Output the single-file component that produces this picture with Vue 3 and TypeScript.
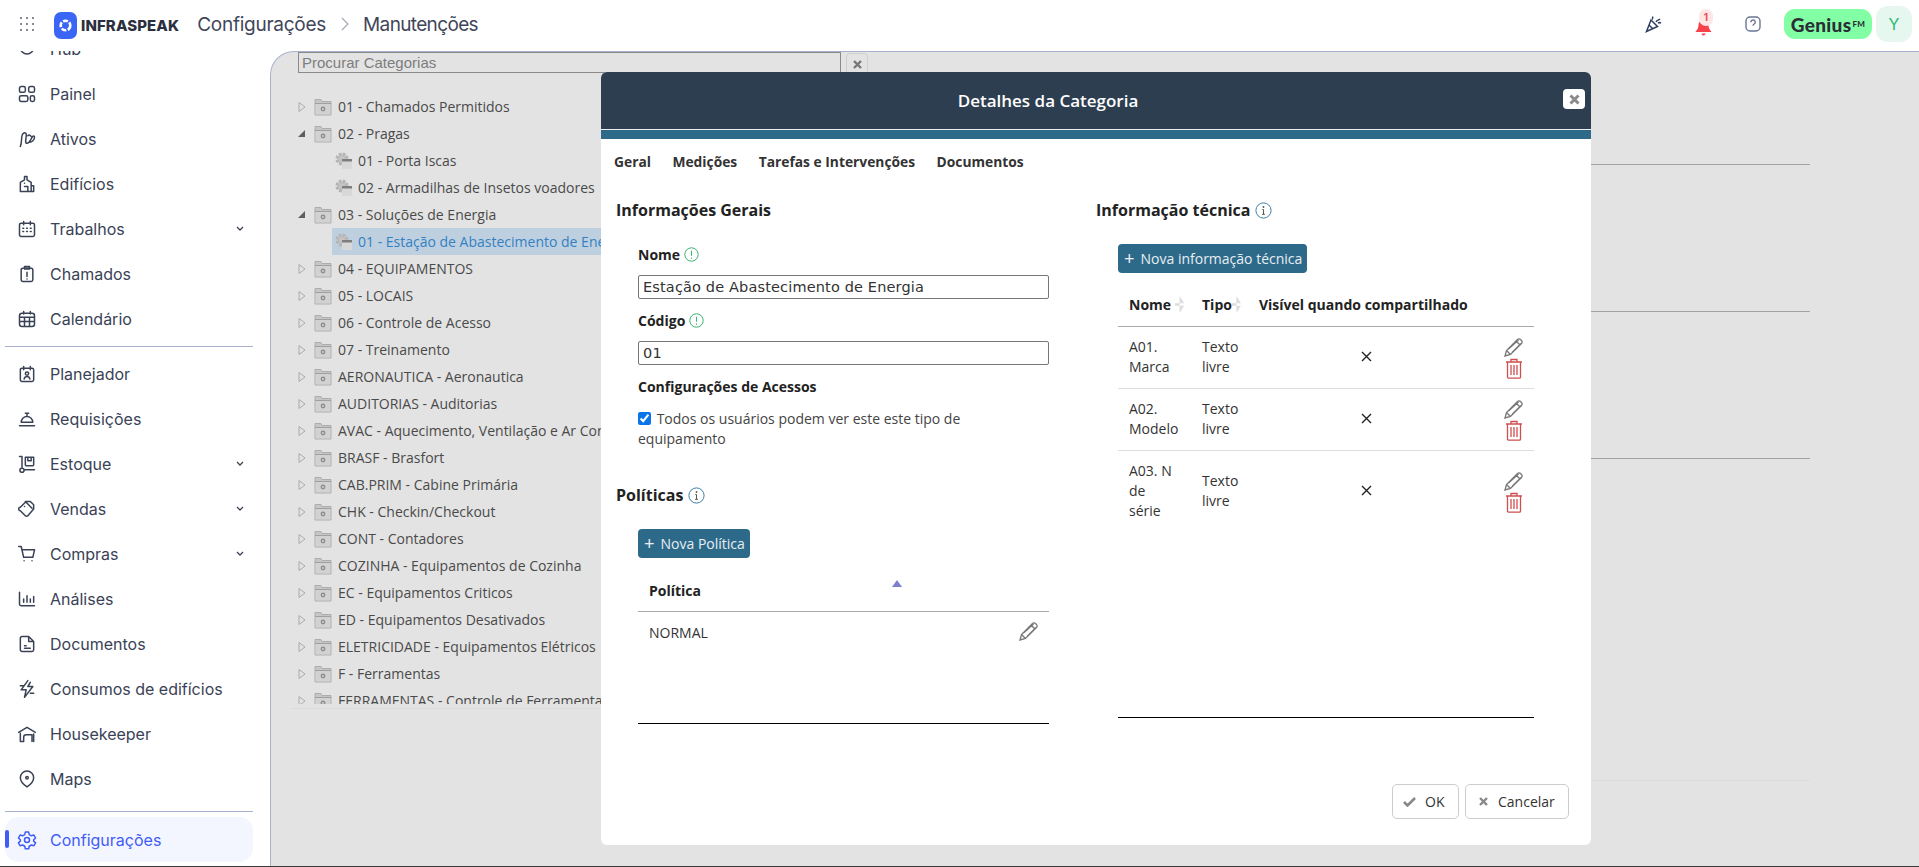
<script setup lang="ts">
interface NavItem { label: string; icon: string; chevron?: boolean }
const navTop: NavItem[] = [
  { label: 'Hub', icon: 'hub' },
  { label: 'Painel', icon: 'painel' },
  { label: 'Ativos', icon: 'ativos' },
  { label: 'Edifícios', icon: 'edificios' },
  { label: 'Trabalhos', icon: 'trabalhos', chevron: true },
  { label: 'Chamados', icon: 'chamados' },
  { label: 'Calendário', icon: 'calendario' },
]
const navMid: NavItem[] = [
  { label: 'Planejador', icon: 'planejador' },
  { label: 'Requisições', icon: 'requisicoes' },
  { label: 'Estoque', icon: 'estoque', chevron: true },
  { label: 'Vendas', icon: 'vendas', chevron: true },
  { label: 'Compras', icon: 'compras', chevron: true },
  { label: 'Análises', icon: 'analises' },
  { label: 'Documentos', icon: 'documentos' },
  { label: 'Consumos de edifícios', icon: 'consumos' },
  { label: 'Housekeeper', icon: 'housekeeper' },
  { label: 'Maps', icon: 'maps' },
]
const icons: Record<string, string> = {
  hub: 'M4 10a8 8 0 1 0 16 0a8 8 0 1 0-16 0',
  painel: 'M5 3h3a2 2 0 0 1 2 2v3a2 2 0 0 1-2 2H5a2 2 0 0 1-2-2V5a2 2 0 0 1 2-2zM16 3h3a2 2 0 0 1 2 2v3a2 2 0 0 1-2 2h-3a2 2 0 0 1-2-2V5a2 2 0 0 1 2-2zM5 14h6a2 2 0 0 1 2 2v3a2 2 0 0 1-2 2H5a2 2 0 0 1-2-2v-3a2 2 0 0 1 2-2zM18 14h1a2 2 0 0 1 2 2v3a2 2 0 0 1-2 2h-1a2 2 0 0 1-2-2v-3a2 2 0 0 1 2-2z',
  ativos: 'M4 21c2-5 1-9 2-13c.6-3 4-5 5-2c1 3-2 9 0 11c2 1 5-3 7-7c1-2 3-2 3 0c0 3-3 6-6 6M13 8c1-1 3-1 4 1',
  edificios: 'M4 21V10l5-3V3h3v4l5 3v11zM17 14h3v7H4M9 15h4v6M9 11h.01',
  trabalhos: 'M5 5h14a2 2 0 0 1 2 2v12a2 2 0 0 1-2 2H5a2 2 0 0 1-2-2V7a2 2 0 0 1 2-2zM8 3v4M16 3v4M7 11h1M11.500 11h1M16 11h1M7 15h1M11.500 15h1M16 15h1',
  chamados: 'M7 5h10a2 2 0 0 1 2 2v12a2 2 0 0 1-2 2H7a2 2 0 0 1-2-2V7a2 2 0 0 1 2-2zM9 3h6v3H9zM12 10v5M12 18h.01',
  calendario: 'M6 5h12a3 3 0 0 1 3 3v10a3 3 0 0 1-3 3H6a3 3 0 0 1-3-3V8a3 3 0 0 1 3-3zM8 3v3M16 3v3M3 10h18M3 15h18M9 10v11M15 10v11',
  planejador: 'M6 5h12a2 2 0 0 1 2 2v12a2 2 0 0 1-2 2H6a2 2 0 0 1-2-2V7a2 2 0 0 1 2-2zM8 3v4M16 3v4M12 9.500a2 2 0 1 0 0 4a2 2 0 1 0 0-4M8.500 18c.5-2 2-3 3.500-3s3 1 3.500 3',
  requisicoes: 'M3 20h18M5 16a7 7 0 0 1 14 0zM12 9V6M10 5h4',
  estoque: 'M3 3h3v13M6 17a2.500 2.500 0 1 0 0 5a2.500 2.500 0 1 0 0-5M9 19h12M10 4h10v9a1 1 0 0 1-1 1h-8a1 1 0 0 1-1-1zM13 4v4h4V4',
  vendas: 'M4 10l7-7h5l4 4v5l-7 8a2 2 0 0 1-3 0l-6-6a2 2 0 0 1 0-4M10 3l8 8M9 9h.01',
  compras: 'M2 3h3l3 13h11l2-9H6M8.500 20h.01M18 20h.01',
  analises: 'M3 4v14a2 2 0 0 0 2 2h16M8 12v4M12 8v8M16 12v4M20 9v7',
  documentos: 'M6 3h8l6 6v10a2 2 0 0 1-2 2H6a2 2 0 0 1-2-2V5a2 2 0 0 1 2-2zM14 3v6h6M9 14h2M9 17h7',
  consumos: 'M13 2L5 13h6l-2 9l10-13h-6l3-5M4 8h4M16 17h4',
  housekeeper: 'M2 10l10-6l10 6M4 21V11M20 21v-9M8 21v-5a3 3 0 0 1 3-3h7v8M4 21h4M8 15h.01',
  maps: 'M12 2.500a8 8 0 0 1 8 8c0 5-5 9-8 11c-3-2-8-6-8-11a8 8 0 0 1 8-8zM12 9a1.500 1.500 0 1 0 0 3a1.500 1.500 0 1 0 0-3',
}
interface TreeRow { label: string; kind: 'closed' | 'open' | 'leaf'; selected?: boolean }
const tree: TreeRow[] = [
  { label: '01 - Chamados Permitidos', kind: 'closed' },
  { label: '02 - Pragas', kind: 'open' },
  { label: '01 - Porta Iscas', kind: 'leaf' },
  { label: '02 - Armadilhas de Insetos voadores', kind: 'leaf' },
  { label: '03 - Soluções de Energia', kind: 'open' },
  { label: '01 - Estação de Abastecimento de Energia', kind: 'leaf', selected: true },
  { label: '04 - EQUIPAMENTOS', kind: 'closed' },
  { label: '05 - LOCAIS', kind: 'closed' },
  { label: '06 - Controle de Acesso', kind: 'closed' },
  { label: '07 - Treinamento', kind: 'closed' },
  { label: 'AERONAUTICA - Aeronautica', kind: 'closed' },
  { label: 'AUDITORIAS - Auditorias', kind: 'closed' },
  { label: 'AVAC - Aquecimento, Ventilação e Ar Condicionado', kind: 'closed' },
  { label: 'BRASF - Brasfort', kind: 'closed' },
  { label: 'CAB.PRIM - Cabine Primária', kind: 'closed' },
  { label: 'CHK - Checkin/Checkout', kind: 'closed' },
  { label: 'CONT - Contadores', kind: 'closed' },
  { label: 'COZINHA - Equipamentos de Cozinha', kind: 'closed' },
  { label: 'EC - Equipamentos Criticos', kind: 'closed' },
  { label: 'ED - Equipamentos Desativados', kind: 'closed' },
  { label: 'ELETRICIDADE - Equipamentos Elétricos', kind: 'closed' },
  { label: 'F - Ferramentas', kind: 'closed' },
  { label: 'FERRAMENTAS - Controle de Ferramentas', kind: 'closed' },
]
const techRows = [
  { nome: 'A01. Marca', tipo: 'Texto livre' },
  { nome: 'A02. Modelo', tipo: 'Texto livre' },
  { nome: 'A03. N\nde\nsérie', tipo: 'Texto livre' },
]
</script>

<template>
  <div class="page">
    <header class="topbar">
      <svg class="grid-ic" width="16" height="16" viewBox="0 0 16 16" fill="#5c6378">
        <template v-for="y in [1, 7, 13]" :key="y">
          <rect v-for="x in [1, 7, 13]" :key="x" :x="x" :y="y" width="2" height="2" rx="1" />
        </template>
      </svg>
      <div class="logo">
        <svg width="23" height="27" viewBox="0 0 23 27">
          <path d="M7 0h9a7 7 0 0 1 7 7v13a7 7 0 0 1-7 7H7a7 7 0 0 1-7-7V7a7 7 0 0 1 7-7z" fill="#3b66f5" />
          <circle cx="11.500" cy="13.500" r="4.800" fill="none" stroke="#fff" stroke-width="2.600" stroke-dasharray="5 1.500" />
        </svg>
        <span>INFRASPEAK</span>
      </div>
      <div class="crumbs">
        <span>Configurações</span>
        <svg width="10" height="14" viewBox="0 0 10 14" fill="none" stroke="#a6a9b3" stroke-width="1.200"><path d="M2 1l6 6l-6 6" /></svg>
        <span class="crumb-last">Manutenções</span>
      </div>
      <div class="top-actions">
        <svg class="act-party" width="18" height="18" viewBox="0 0 18 18" fill="none" stroke="#2f3e63" stroke-width="1.500">
          <path d="M1.500 16.500L6 5l6.500 6.500z" />
          <path d="M4 10l4 4M7 4.500c1-1 1-2 .5-3M11 7c1-2 3-2 4-3M12 2h.01M16 8c-1-.5-2-.5-3 0" />
        </svg>
        <div class="bell">
          <svg width="17" height="17" viewBox="0 0 17 17" fill="#f8404a">
            <path d="M8.500 1a5 5 0 0 0-5 5c0 4-2 5-3 7h16c-1-2-3-3-3-7a5 5 0 0 0-5-5z" />
            <path d="M6.500 14.500h4a2 2 0 0 1-4 0z" />
          </svg>
          <span class="badge">1</span>
        </div>
        <svg class="act-help" width="16" height="16" viewBox="0 0 16 16" fill="none" stroke="#6a7597" stroke-width="1.400">
          <rect x="1" y="1" width="14" height="14" rx="4" />
          <path d="M5.800 6.200a2.200 2.200 0 1 1 3.400 1.800c-.8.500-1.200 1-1.200 1.800M8 12h.01" />
        </svg>
        <div class="genius">Genius<small>FM</small></div>
        <div class="avatar">Y</div>
      </div>
    </header>

    <div class="body">
      <aside class="sidebar">
        <nav class="nav-scroll">
          <div v-for="item in navTop" :key="item.label" class="nav-item">
            <svg width="20" height="20" viewBox="0 0 24 24" fill="none" stroke="#3a4256" stroke-width="1.800" stroke-linecap="round" stroke-linejoin="round"><path :d="icons[item.icon]" /></svg>
            <span>{{ item.label }}</span>
            <svg v-if="item.chevron" class="chev" width="8" height="6" viewBox="0 0 8 6" fill="none" stroke="#3a4256" stroke-width="1.300"><path d="M1 1l3 3l3-3" /></svg>
          </div>
          <div class="nav-sep" />
          <div v-for="item in navMid" :key="item.label" class="nav-item">
            <svg width="20" height="20" viewBox="0 0 24 24" fill="none" stroke="#3a4256" stroke-width="1.800" stroke-linecap="round" stroke-linejoin="round"><path :d="icons[item.icon]" /></svg>
            <span>{{ item.label }}</span>
            <svg v-if="item.chevron" class="chev" width="8" height="6" viewBox="0 0 8 6" fill="none" stroke="#3a4256" stroke-width="1.300"><path d="M1 1l3 3l3-3" /></svg>
          </div>
        </nav>
        <div class="nav-bottom">
          <div class="nav-sep flush" />
          <div class="nav-active">
            <i class="active-mark" />
            <svg width="20" height="20" viewBox="0 0 24 24" fill="none" stroke="#3f5cf6" stroke-width="1.800" stroke-linejoin="round">
              <circle cx="12" cy="12" r="3" />
              <path d="M10 2.500h4l.7 3l2.600 1.500l3-.9l2 3.500l-2.300 2.100v1.600l2.300 2.100l-2 3.500l-3-.9l-2.600 1.500l-.7 3h-4l-.7-3l-2.600-1.500l-3 .9l-2-3.500l2.300-2.100v-1.600l-2.300-2.100l2-3.500l3 .9l2.600-1.500z" />
            </svg>
            <span>Configurações</span>
          </div>
        </div>
      </aside>

      <main class="panel">
        <div class="search-row">
          <div class="search">Procurar Categorias</div>
          <div class="search-clear">
            <svg width="9" height="9" viewBox="0 0 9 9" stroke="#777" stroke-width="2.400"><path d="M1 1l7 7M8 1l-7 7" /></svg>
          </div>
        </div>
        <ul class="tree">
          <li v-for="row in tree" :key="row.label" class="tree-row" :class="{ leaf: row.kind === 'leaf', selected: row.selected }">
            <template v-if="row.kind !== 'leaf'">
              <svg class="arrow" width="8" height="10" viewBox="0 0 8 10">
                <path v-if="row.kind === 'closed'" d="M1 .500l6 4.500l-6 4.500z" fill="none" stroke="#aaa" />
                <path v-else d="M0 8h7V1z" fill="#5e5e5e" />
              </svg>
              <svg class="folder" width="18" height="18" viewBox="0 0 18 18">
                <path d="M1 1.500h6l1 2h9V17H1z" fill="#c6c6c6" stroke="#adadad" />
                <rect x="1.500" y="6" width="15" height="10.500" fill="#d2d2d2" />
                <path d="M1 5.500h16" stroke="#a0a0a0" />
                <circle cx="9" cy="11" r="2.400" fill="#8d8d8d" />
                <circle cx="9" cy="11" r="1" fill="#d5d5d5" />
              </svg>
            </template>
            <svg v-else class="leaf-ic" width="18" height="18" viewBox="0 0 18 18">
              <circle cx="7" cy="7" r="4.800" fill="#c4c4c4" stroke="#b5b5b5" stroke-width="3.500" stroke-dasharray="2.500 1.300" />
              <path d="M7 7h10v10H7z" fill="#d8d8d8" />
              <path d="M7 7h10v2.500H7z" fill="#7e7e7e" />
            </svg>
            <span class="tree-label">{{ row.label }}</span>
          </li>
        </ul>
        <div class="bg-lines">
          <i /><i /><i />
        </div>
        <div class="panel-foot" />
        <div class="panel-foot right" />
      </main>
    </div>

    <section class="modal">
      <header class="modal-head">
        <h2>Detalhes da Categoria</h2>
        <button class="modal-close" type="button" aria-label="Fechar">
          <svg width="11" height="11" viewBox="0 0 11 11" stroke="#8a8a8a" stroke-width="3"><path d="M1.500 1.500l8 8M9.500 1.500l-8 8" /></svg>
        </button>
      </header>
      <div class="modal-strip" />
      <nav class="tabs">
        <span>Geral</span><span>Medições</span><span>Tarefas e Intervenções</span><span>Documentos</span>
      </nav>
      <div class="modal-grid">
        <div class="col-left">
          <h3 class="sec-title">Informações Gerais</h3>
          <div class="indent">
            <label class="f-label">Nome
              <svg width="15" height="15" viewBox="0 0 15 15" fill="none" stroke="#3cb371"><circle cx="7.500" cy="7.500" r="6.700" /><path d="M7.500 3.800v5M7.500 10.500v1.200" stroke-width="1.100" /></svg>
            </label>
            <input class="f-input" value="Estação de Abastecimento de Energia" readonly />
            <label class="f-label second">Código
              <svg width="15" height="15" viewBox="0 0 15 15" fill="none" stroke="#3cb371"><circle cx="7.500" cy="7.500" r="6.700" /><path d="M7.500 3.800v5M7.500 10.500v1.200" stroke-width="1.100" /></svg>
            </label>
            <input class="f-input" value="01" readonly />
            <div class="f-label access">Configurações de Acessos</div>
            <label class="check-line"><input type="checkbox" checked /> Todos os usuários podem ver este este tipo de equipamento</label>
          </div>
          <h3 class="sec-title policies">Políticas
            <svg class="info" width="17" height="17" viewBox="0 0 17 17" fill="none" stroke="#3d7ea6"><circle cx="8.500" cy="8.500" r="7.600" /><path d="M8.500 7.500v4.500M7 12.300h3M7.300 7.500h1.200" stroke="#555" /><circle cx="8.500" cy="5" r=".9" fill="#555" stroke="none" /></svg>
          </h3>
          <div class="indent">
            <button class="btn-new" type="button"><span class="plus">+</span>Nova Política</button>
            <table class="pol-table">
              <thead>
                <tr><th>Política<span class="sort-up" /></th></tr>
              </thead>
              <tbody>
                <tr>
                  <td>NORMAL
                    <svg class="pencil" width="21" height="21" viewBox="0 0 21 21" fill="none" stroke="#777" stroke-width="1.300"><path d="M2 19l1.500-5.500L14.500 2.500a2 2 0 0 1 3 0l1 1a2 2 0 0 1 0 3L7.500 17.500zM3.500 13.500l4 4M13 4l4 4M5.500 12L15.500 3M9 15.500L18 6.500" /></svg>
                  </td>
                </tr>
              </tbody>
            </table>
          </div>
        </div>
        <div class="col-right">
          <h3 class="sec-title">Informação técnica
            <svg class="info" width="17" height="17" viewBox="0 0 17 17" fill="none" stroke="#3d7ea6"><circle cx="8.500" cy="8.500" r="7.600" /><path d="M8.500 7.500v4.500M7 12.300h3M7.300 7.500h1.200" stroke="#555" /><circle cx="8.500" cy="5" r=".9" fill="#555" stroke="none" /></svg>
          </h3>
          <div class="indent">
            <button class="btn-new" type="button"><span class="plus">+</span>Nova informação técnica</button>
            <table class="tech-table">
              <thead>
                <tr>
                  <th class="c-nome">Nome<i class="sort2 s-nome" /></th>
                  <th class="c-tipo">Tipo<i class="sort2" /></th>
                  <th>Visível quando compartilhado</th>
                  <th class="c-act" />
                </tr>
              </thead>
              <tbody>
                <tr v-for="r in techRows" :key="r.nome">
                  <td class="c-nome">{{ r.nome }}</td>
                  <td class="c-tipo">{{ r.tipo }}</td>
                  <td class="c-x">
                    <svg width="11" height="11" viewBox="0 0 11 11" stroke="#222" stroke-width="1.400"><path d="M1 1l9 9M10 1l-9 9" /></svg>
                  </td>
                  <td class="c-act">
                    <svg class="pencil-b" width="21" height="21" viewBox="0 0 21 21" fill="none" stroke="#777" stroke-width="1.300"><path d="M2 19l1.500-5.500L14.500 2.500a2 2 0 0 1 3 0l1 1a2 2 0 0 1 0 3L7.500 17.500zM3.500 13.500l4 4M13 4l4 4M5.500 12L15.500 3M9 15.500L18 6.500" /></svg>
                    <svg class="trash" width="18" height="21" viewBox="0 0 18 21" fill="none" stroke="#cf4f4f" stroke-width="1.300"><path d="M1 4h16M6 4V1.500h6V4M2.500 4v15a1.200 1.200 0 0 0 1.200 1.200h10.600a1.200 1.200 0 0 0 1.200-1.200V4M6 7v10M9 7v10M12 7v10" /></svg>
                  </td>
                </tr>
                <tr class="filler"><td colspan="4" /></tr>
              </tbody>
            </table>
          </div>
        </div>
      </div>
      <footer class="modal-foot">
        <button class="btn-foot ok" type="button">
          <svg width="13" height="11" viewBox="0 0 13 11" fill="none" stroke="#888" stroke-width="2.600"><path d="M1 6l3.500 3.500L12 2" /></svg>
          OK
        </button>
        <button class="btn-foot cancel" type="button">
          <svg width="9" height="9" viewBox="0 0 9 9" stroke="#888" stroke-width="2.400"><path d="M1 1l7 7M8 1l-7 7" /></svg>
          Cancelar
        </button>
      </footer>
    </section>
  </div>
</template>

<style>
html, body { margin: 0; padding: 0; background: #fff; overflow: hidden; }
</style>

<style scoped>
.page {
  position: relative;
  width: 1919px;
  height: 867px;
  overflow: hidden;
  display: flex;
  flex-direction: column;
  background: #fff;
  font-family: "Open Sans", "Liberation Sans", sans-serif;
  color: #333;
}
.topbar { height: 51px; flex: none; display: flex; align-items: center; padding: 0 7px 3px 19px; box-sizing: border-box; }
.grid-ic { flex: none; }
.logo { display: flex; align-items: center; gap: 4px; margin-left: 19px; margin-top: 3px; }
.logo span { font: 800 15px Inter, sans-serif; color: #2b3040; letter-spacing: .1px; }
.crumbs { display: flex; align-items: center; margin-left: 18px; gap: 14px; font: 400 19px Inter, sans-serif; color: #3f465a; }
.crumbs span { letter-spacing: -.25px; }
.crumbs .crumb-last { letter-spacing: -.65px; margin-left: -1px; }
.top-actions { margin-left: auto; display: flex; align-items: center; }
.act-party { margin-right: 32px; }
.bell { position: relative; width: 17px; height: 24px; display: flex; align-items: flex-end; margin-right: 33px; }
.badge { position: absolute; top: -3px; left: 4px; width: 14px; height: 17px; border-radius: 7px; background: #fde6e6; color: #f04d4d; font: 700 10px Inter, sans-serif; text-align: center; line-height: 17px; }
.act-help { margin-right: 23px; }
.genius { width: 88px; height: 30px; background: #82ffa5; border-radius: 11px; font: 900 19px Lato, sans-serif; letter-spacing: .3px; color: #2a2e36; display: flex; align-items: center; justify-content: center; }
.genius small { font-size: 8px; margin-left: 1px; }
.avatar { width: 36px; height: 36px; margin-left: 4px; border-radius: 12px; background: #e6f7ef; color: #27b974; font: 400 16px Inter, sans-serif; display: flex; align-items: center; justify-content: center; }

.body { flex: 1; min-height: 0; display: flex; border-bottom: 1px solid #3a3a3a; }
.sidebar { width: 270px; flex: none; display: flex; flex-direction: column; overflow: hidden; }
.nav-scroll { height: 785px; flex: none; margin-top: -25px; overflow: hidden; }
.nav-item { height: 45px; display: flex; align-items: center; padding-left: 17px; padding-right: 26px; gap: 13px; font: 400 16px Inter, sans-serif; color: #3a4256; }
.chev { margin-left: auto; }
.nav-sep { height: 1px; background: #a9b1cf; margin: 5px 17px 4px 5px; }
.nav-bottom { flex: 1; }
.nav-sep.flush { margin: 0 17px 5px 5px; }
.nav-active { position: relative; height: 45px; margin: 0 17px 0 5px; border-radius: 14px; background: #f3f6fe; display: flex; align-items: center; gap: 13px; padding-left: 12px; font: 400 16px Inter, sans-serif; color: #3f5cf6; }
.active-mark { position: absolute; left: 0; top: 13px; width: 4px; height: 18px; border-radius: 2px; background: #3f5cf6; }

.panel { flex: 1; min-width: 0; position: relative; background: #e3e3e3; border-top: 1px solid #a9b1cf; border-left: 1px solid #a9b1cf; border-top-left-radius: 24px; overflow: hidden; }
.search-row { display: flex; align-items: flex-start; gap: 5px; margin: 0 0 0 27px; }
.search { width: 543px; height: 21px; box-sizing: border-box; border: 1px solid #8a8a8a; font: 400 15px "Liberation Sans", sans-serif; color: #7d7d7d; padding-left: 3px; line-height: 19px; }
.search-clear { width: 22px; height: 22px; border: 1px solid #d0d0d0; background: #e3e3e3; display: flex; align-items: center; justify-content: center; border-radius: 4px; box-sizing: border-box; margin-top: 1px; }
.tree { list-style: none; margin: 18px 0 0; padding: 0 0 0 27px; width: 600px; height: 611px; overflow: hidden; }
.tree-row { height: 27px; display: flex; align-items: center; white-space: nowrap; font-size: 14px; color: #4a4a4a; }
.tree-row.leaf { margin-left: 34px; padding-left: 3px; }
.tree-row.selected { background: #bed0df; color: #3480c2; }
.arrow { margin-right: 8px; flex: none; }
.folder { margin-right: 6px; flex: none; }
.leaf-ic { margin-right: 5px; flex: none; }
.bg-lines { position: absolute; left: 1320px; top: 0; width: 219px; height: 420px; }
.bg-lines i { position: absolute; left: 0; right: 0; height: 1px; background: #a3a3a3; }
.bg-lines i:nth-child(1) { top: 112px; }
.bg-lines i:nth-child(2) { top: 259px; }
.bg-lines i:nth-child(3) { top: 406px; }
.panel-foot { position: absolute; left: 20px; width: 800px; top: 656px; height: 1px; background: #dcdcdc; }
.panel-foot.right { left: 1320px; width: 219px; top: 728px; }

.modal { position: absolute; left: 601px; top: 72px; width: 990px; height: 773px; background: #fff; border-radius: 6px; display: flex; flex-direction: column; overflow: hidden; }
.modal-head { height: 58px; box-sizing: border-box; flex: none; background: #2c3e50; display: flex; align-items: center; justify-content: center; position: relative; border-bottom: 1px solid #eee; padding-right: 96px; }
.modal-head h2 { margin: 0; font: 600 17px "Open Sans", sans-serif; color: #fff; }
.modal-close { position: absolute; right: 6px; top: 17px; width: 22px; height: 20px; padding: 0; border: 0; border-radius: 4px; background: #fff; display: flex; align-items: center; justify-content: center; }
.modal-strip { height: 9px; flex: none; background: #2d6a8a; }
.tabs { display: flex; gap: 21.500px; padding: 13px 13px 0; font: 700 13.800px "Open Sans", sans-serif; color: #333; height: 33px; box-sizing: border-box; }
.modal-grid { flex: 1; display: grid; grid-template-columns: 480px 1fr; padding: 0 0 0 15px; }
.sec-title { margin: 0; font: 700 16px "Open Sans", sans-serif; color: #222; display: flex; align-items: center; gap: 5px; }
.col-left .sec-title:first-child, .col-right .sec-title:first-child { margin-top: 27px; }
.indent { padding-left: 22px; }
.f-label { font: 700 14px "Open Sans", sans-serif; color: #222; display: flex; align-items: center; gap: 4px; margin-top: 24px; }
.f-input { display: block; width: 411px; height: 24px; box-sizing: border-box; border: 1px solid #767676; border-radius: 2px; padding: 0 4px; margin-top: 11px; font: 400 14.500px "DejaVu Sans", sans-serif; letter-spacing: .15px; color: #333; outline: none; }
.f-label.second { margin-top: 12px; }
.f-label.access { margin-top: 12px; }
.check-line { display: block; width: 340px; margin-top: 13px; font-size: 14px; line-height: 20px; color: #444; }
.check-line input { margin: 0 2px 0 0; width: 13px; height: 13px; vertical-align: -1px; accent-color: #0a75e8; }
.policies { margin-top: 35px; }
.btn-new { display: flex; align-items: center; margin-top: 23px; height: 29px; padding: 0 5px 0 6px; background: #2d6a8a; border: 0; border-radius: 4px; color: #e8eef2; font: 400 14px "Open Sans", sans-serif; }
.plus { font: 400 18px "Liberation Sans", sans-serif; margin-right: 6px; line-height: 1; }
.pol-table { width: 411px; margin-top: 11px; border-collapse: collapse; height: 155px; border-bottom: 1px solid #000; }
.pol-table th { position: relative; text-align: left; height: 42px; padding: 0 11px; font: 700 14px "Open Sans", sans-serif; color: #222; border-bottom: 1px solid #aaa; }
.sort-up { position: absolute; left: 254px; top: 11px; width: 0; height: 0; border-left: 5px solid transparent; border-right: 5px solid transparent; border-bottom: 7px solid #7f7fd0; }
.pol-table td { position: relative; vertical-align: top; padding: 11px; font-size: 14px; color: #333; }
.pencil { position: absolute; right: 10px; top: 9px; }
.tech-table { width: 416px; margin-top: 10px; border-collapse: collapse; border-bottom: 1px solid #000; table-layout: fixed; }
.tech-table th { text-align: left; height: 43px; padding: 0 0 0 11px; white-space: nowrap; font: 700 14px "Open Sans", sans-serif; color: #222; border-bottom: 1px solid #aaa; }
.tech-table td { padding: 10px 0 11px 11px; font-size: 14px; line-height: 20px; color: #333; border-bottom: 1px solid #ddd; vertical-align: middle; white-space: pre-line; }
.tech-table tbody tr:nth-child(3) td, .tech-table .filler td { border-bottom: 0; }
.tech-table .filler td { height: 185px; padding: 0; }
.c-nome { width: 62px; }
.c-tipo { width: 46px; }
.c-act { width: 50px; }
.c-x { text-align: center; }
.tech-table td.c-act { padding: 0 0 0 30px; }
.pencil-b, .trash { display: block; }
.trash { margin-left: 2px; }
.sort2 { display: inline-block; width: 9px; height: 17px; vertical-align: -3px; background: #dcdcdc; clip-path: polygon(50% 0, 100% 42%, 0 42%, 0 58%, 100% 58%, 50% 100%); }
.s-nome { margin-left: 4px; }
.modal-foot { flex: none; display: flex; justify-content: flex-end; gap: 6px; padding: 0 22px 26px 0; }
.btn-foot { height: 35px; box-sizing: border-box; display: flex; align-items: center; background: #fff; border: 1px solid #ccc; border-radius: 5px; font: 400 14px "Open Sans", sans-serif; color: #333; }
.btn-foot.ok { width: 67px; padding: 0 0 0 10px; gap: 9px; }
.btn-foot.cancel { width: 104px; padding: 0 0 0 13px; gap: 10px; }
</style>
